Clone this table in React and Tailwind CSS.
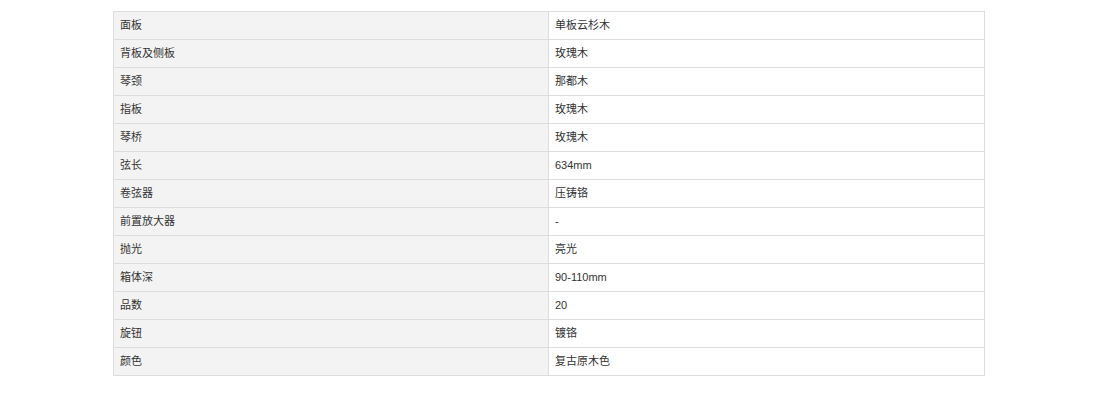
import React from "react";

const specs = [
  ["面板", "单板云杉木"],
  ["背板及侧板", "玫瑰木"],
  ["琴颈", "那都木"],
  ["指板", "玫瑰木"],
  ["琴桥", "玫瑰木"],
  ["弦长", "634mm"],
  ["卷弦器", "压铸铬"],
  ["前置放大器", "-"],
  ["抛光", "亮光"],
  ["箱体深", "90-110mm"],
  ["品数", "20"],
  ["旋钮", "镀铬"],
  ["颜色", "复古原木色"],
];

export default function App() {
  return (
    <div className="w-[1100px] h-[402px] bg-white pt-[11px] font-['Liberation_Sans','Noto_Sans_CJK_SC',sans-serif] text-[11px] text-[#333]">
      <div className="ml-[113px] w-[872px] border border-[#dddddd]">
        {specs.map(([label, value], i) => (
          <div
            key={label}
            className={`flex ${i === 0 ? "h-[27px]" : "h-[28px] border-t border-[#dddddd]"}`}
          >
            <div className="w-[435px] bg-[#f3f3f3] border-r border-[#dddddd] pl-[6px] flex items-center">
              {label}
            </div>
            <div className="flex-1 pl-[6px] flex items-center">{value}</div>
          </div>
        ))}
      </div>
    </div>
  );
}
